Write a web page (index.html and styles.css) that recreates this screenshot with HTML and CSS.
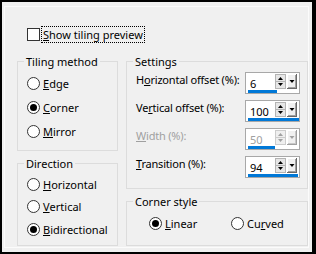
FILE: index.html
```html
<!DOCTYPE html>
<html>
<head>
    <title>Tiling</title>
    <link rel="stylesheet" href="styles.css">
</head>
<body>
    <div class="window">
        <div class="panel">
            <div class="check-row">
                <span class="checkbox"></span>
                <span class="focus"><u>S</u>how tiling preview</span>
            </div>
            <div class="groups">
                <div class="col col-left">
                    <fieldset class="group tiling">
                        <legend>Tiling method</legend>
                        <div class="group-body">
                            <div class="radio"><span class="circle"></span><u>E</u>dge</div>
                            <div class="radio"><span class="circle checked"></span><u>C</u>orner</div>
                            <div class="radio"><span class="circle"></span><u>M</u>irror</div>
                        </div>
                    </fieldset>
                    <fieldset class="group direction">
                        <legend>Direction</legend>
                        <div class="group-body">
                            <div class="radio"><span class="circle"></span><u>H</u>orizontal</div>
                            <div class="radio"><span class="circle"></span><u>V</u>ertical</div>
                            <div class="radio"><span class="circle checked"></span><u>B</u>idirectional</div>
                        </div>
                    </fieldset>
                </div>
                <div class="col col-right">
                    <fieldset class="group settings">
                        <legend>Settings</legend>
                        <div class="group-body fields">
                            <div class="field">
                                <span class="field-label">H<u>o</u>rizontal offset (%):</span>
                                <div class="spin">
                                    <div class="spin-top">
                                        <span class="val">6</span>
                                        <svg class="updown" width="11" height="15" viewBox="0 0 11 15"><rect x="0.5" y="0.5" width="10" height="14" fill="#e6e6e6" stroke="#b4b4b4"/><line x1="1" y1="7.5" x2="10" y2="7.5" stroke="#b4b4b4"/><path d="M3 6h5l-2.5-3z" fill="#000"/><path d="M3 9h5l-2.5 3z" fill="#000"/></svg>
                                        <svg class="drop" width="10" height="15" viewBox="0 0 10 15"><rect x="0" y="0" width="10" height="15" fill="#696969"/><rect x="0" y="0" width="9" height="14" fill="#fff"/><rect x="1" y="1" width="8" height="13" fill="#a0a0a0"/><rect x="1" y="1" width="7" height="12" fill="#f0f0f0"/><path d="M2.5 6h5l-2.5 3z" fill="#000"/></svg>
                                    </div>
                                    <div class="bar" style="width:29px"></div>
                                </div>
                            </div>
                            <div class="field">
                                <span class="field-label">Ve<u>r</u>tical offset (%):</span>
                                <div class="spin">
                                    <div class="spin-top">
                                        <span class="val">100</span>
                                        <svg class="updown" width="11" height="15" viewBox="0 0 11 15"><rect x="0.5" y="0.5" width="10" height="14" fill="#e6e6e6" stroke="#b4b4b4"/><line x1="1" y1="7.5" x2="10" y2="7.5" stroke="#b4b4b4"/><path d="M3 6h5l-2.5-3z" fill="#000"/><path d="M3 9h5l-2.5 3z" fill="#000"/></svg>
                                        <svg class="drop" width="10" height="15" viewBox="0 0 10 15"><rect x="0" y="0" width="10" height="15" fill="#696969"/><rect x="0" y="0" width="9" height="14" fill="#fff"/><rect x="1" y="1" width="8" height="13" fill="#a0a0a0"/><rect x="1" y="1" width="7" height="12" fill="#f0f0f0"/><path d="M2.5 6h5l-2.5 3z" fill="#000"/></svg>
                                    </div>
                                    <div class="bar" style="width:51px"></div>
                                </div>
                            </div>
                            <div class="field disabled">
                                <span class="field-label"><u>W</u>idth (%):</span>
                                <div class="spin">
                                    <div class="spin-top">
                                        <span class="val">50</span>
                                        <svg class="updown" width="11" height="15" viewBox="0 0 11 15"><rect x="0.5" y="0.5" width="10" height="14" fill="#efefef" stroke="#cccccc"/><line x1="1" y1="7.5" x2="10" y2="7.5" stroke="#cccccc"/><path d="M3 6h5l-2.5-3z" fill="#a0a0a0"/><path d="M3 9h5l-2.5 3z" fill="#a0a0a0"/></svg>
                                        <svg class="drop" width="10" height="15" viewBox="0 0 10 15"><rect x="0" y="0" width="10" height="15" fill="#a0a0a0"/><rect x="0" y="0" width="9" height="14" fill="#fff"/><rect x="1" y="1" width="8" height="13" fill="#c8c8c8"/><rect x="1" y="1" width="7" height="12" fill="#f0f0f0"/><path d="M2.5 6h5l-2.5 3z" fill="#a0a0a0"/></svg>
                                    </div>
                                    <div class="bar" style="width:27px"></div>
                                </div>
                            </div>
                            <div class="field">
                                <span class="field-label"><u>T</u>ransition (%):</span>
                                <div class="spin">
                                    <div class="spin-top">
                                        <span class="val">94</span>
                                        <svg class="updown" width="11" height="15" viewBox="0 0 11 15"><rect x="0.5" y="0.5" width="10" height="14" fill="#e6e6e6" stroke="#b4b4b4"/><line x1="1" y1="7.5" x2="10" y2="7.5" stroke="#b4b4b4"/><path d="M3 6h5l-2.5-3z" fill="#000"/><path d="M3 9h5l-2.5 3z" fill="#000"/></svg>
                                        <svg class="drop" width="10" height="15" viewBox="0 0 10 15"><rect x="0" y="0" width="10" height="15" fill="#696969"/><rect x="0" y="0" width="9" height="14" fill="#fff"/><rect x="1" y="1" width="8" height="13" fill="#a0a0a0"/><rect x="1" y="1" width="7" height="12" fill="#f0f0f0"/><path d="M2.5 6h5l-2.5 3z" fill="#000"/></svg>
                                    </div>
                                    <div class="bar" style="width:50px"></div>
                                </div>
                            </div>
                        </div>
                    </fieldset>
                    <fieldset class="group corner">
                        <legend>Corner style</legend>
                        <div class="group-body corner-row">
                            <div class="radio linear"><span class="circle checked"></span><u>L</u>inear</div>
                            <div class="radio"><span class="circle"></span>Cu<u>r</u>ved</div>
                        </div>
                    </fieldset>
                </div>
            </div>
        </div>
    </div>
</body>
</html>
```
FILE: styles.css
```css
body {
    margin: 0;
    font-family: "Noto Sans", "Open Sans", sans-serif;
    font-size: 11px;
    line-height: 15px;
    color: #000;
    background: #000;
}
.window {
    width: 316px;
    height: 254px;
    box-sizing: border-box;
    border-style: solid;
    border-color: #000;
    border-width: 2px 4px 2px 2px;
    background: #f0f0f0;
    display: flex;
}
.panel {
    flex: 1;
    margin: 4px 4px 4px 2px;
    border: 1px solid #fbfbfb;
    padding: 20px 0 0 12px;
    display: flex;
    flex-direction: column;
}
.check-row {
    display: flex;
    align-items: center;
    margin-left: 10px;
}
.checkbox {
    width: 13px;
    height: 13px;
    box-sizing: border-box;
    border: 1px solid #333;
    background: #fff;
    margin-right: 2px;
}
.focus {
    outline: 1px dotted #000;
    padding: 0 1px;
}
u {
    text-decoration-thickness: 1px;
    text-underline-offset: 1px;
}
.groups {
    display: flex;
    gap: 8px;
    margin-top: 13px;
}
.col {
    display: flex;
    flex-direction: column;
    gap: 6px;
}
.col-left {
    width: 101px;
}
.col-right {
    width: 182px;
}
.group {
    margin: 0;
    min-width: 0;
    border: 1px solid #dcdcdc;
    padding: 0;
    box-sizing: border-box;
}
legend {
    padding: 0 2px;
    margin-left: 6px;
    line-height: 13px;
}
.group-body {
    padding-left: 9px;
}
.radio {
    display: flex;
    align-items: center;
    white-space: nowrap;
}
.circle {
    width: 13px;
    height: 13px;
    box-sizing: border-box;
    border: 1px solid #333;
    border-radius: 50%;
    background: #fff;
    margin-right: 3px;
    display: flex;
    align-items: center;
    justify-content: center;
}
.circle.checked::after {
    content: "";
    width: 7px;
    height: 7px;
    border-radius: 50%;
    background: #000;
}
.tiling {
    height: 96px;
}
.tiling .group-body {
    padding-top: 3px;
}
.tiling .radio {
    height: 24px;
}
.direction {
    height: 89px;
}
.direction .group-body {
    padding-top: 3px;
}
.direction .radio {
    height: 22.5px;
}
.settings {
    height: 134px;
}
.fields {
    padding-top: 4px;
    display: flex;
    flex-direction: column;
    gap: 6px;
}
.field {
    display: flex;
    justify-content: space-between;
    align-items: flex-start;
    height: 22px;
    padding-right: 7px;
}
.field-label {
    white-space: nowrap;
    letter-spacing: -0.2px;
}
.disabled {
    color: #a0a0a0;
}
.spin {
    width: 55px;
    height: 22px;
    box-sizing: border-box;
    border: 1px solid #a8a8a8;
    background: #fff;
    display: flex;
    flex-direction: column;
    padding: 1px 2px 0 1px;
}
.spin-top {
    display: flex;
    align-items: flex-start;
    height: 16px;
}
.val {
    flex: 1;
    padding-left: 3px;
    margin-top: 2px;
}
.updown {
    display: block;
}
.drop {
    display: block;
    margin-left: 1px;
}
.bar {
    height: 3px;
    background: #0078d7;
    margin-left: 1px;
}
.corner {
    height: 51px;
}
.corner-row {
    display: flex;
    padding: 4px 0 0 22px;
}
.corner .radio {
    height: 22px;
}
.corner .linear {
    width: 82px;
}
```
